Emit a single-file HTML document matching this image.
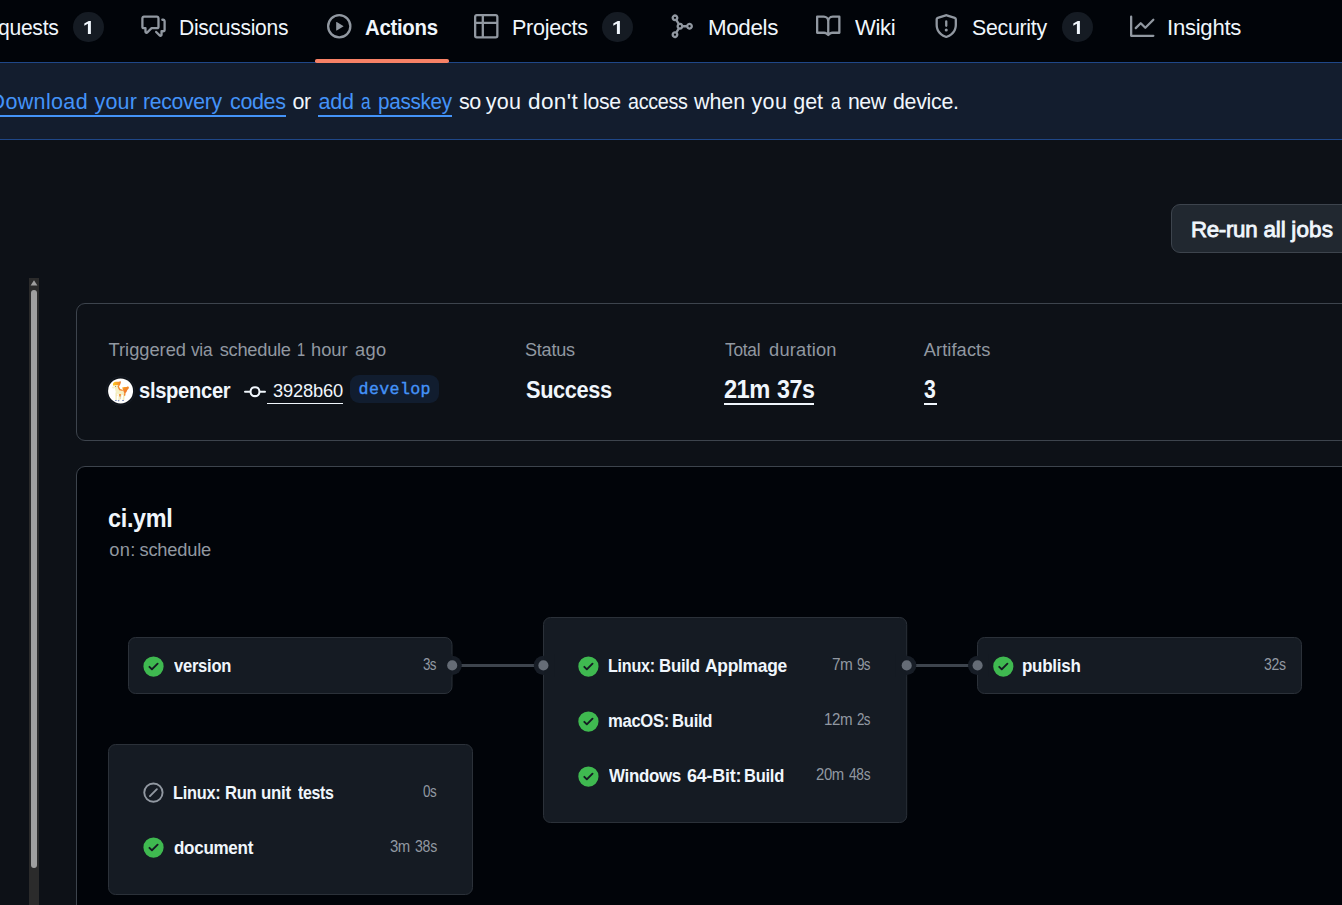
<!DOCTYPE html>
<html lang="en">
<head>
<meta charset="utf-8">
<title>ci.yml · Actions</title>
<style>
html,body{margin:0;padding:0}
body{width:1342px;height:905px;overflow:hidden;background:#0d1117;position:relative;font-family:"Liberation Sans",sans-serif;color:#f0f6fc}
.abs{position:absolute}
.t{position:absolute;white-space:pre;margin:0;padding:0}
#nav{left:0;top:0;width:1342px;height:62px;background:#010409}
#banner{left:-2px;top:62px;width:1346px;height:76px;background:#131d2e;border:1px solid #1f4788;border-left:0;border-right:0}
.counter{width:31px;height:30px;border-radius:15px;background:#151b23}
.ico{position:absolute;fill:#9198a1}
#btn{left:1171px;top:204px;width:220px;height:47px;border:1px solid #3d444d;border-radius:9px;background:#212830}
#card1{left:76px;top:303px;width:1400px;height:136px;border:1px solid #3d444d;border-radius:9px;background:#0d1117}
#card2{left:76px;top:466px;width:1400px;height:600px;border:1px solid #3d444d;border-radius:9px;background:#010409}
.ul{position:absolute;background:#f0f6fc}
</style>
</head>
<body>
<div id="nav" class="abs"></div>
<div id="banner" class="abs"></div>
<!-- active tab underline -->
<div class="abs" style="left:315.200px;top:59px;width:134.300px;height:3.600px;border-radius:1.800px;background:#f78166"></div>

<!-- nav counters -->
<div class="abs counter" style="left:72.9px;top:12px"></div>
<svg class="abs" style="left:84.45px;top:21px;fill:#f0f6fc" width="7" height="13.2" viewBox="0 0 7 13.2"><path d="M6.900 0H4.700L0.300 2.500V4.700L3.900 2.800V13.100H6.900Z"/></svg>
<div class="abs counter" style="left:601.9px;top:12px"></div>
<svg class="abs" style="left:613.45px;top:21px;fill:#f0f6fc" width="7" height="13.2" viewBox="0 0 7 13.2"><path d="M6.900 0H4.700L0.300 2.500V4.700L3.900 2.800V13.100H6.900Z"/></svg>
<div class="abs counter" style="left:1061.9px;top:12px"></div>
<svg class="abs" style="left:1073.45px;top:21px;fill:#f0f6fc" width="7" height="13.2" viewBox="0 0 7 13.2"><path d="M6.900 0H4.700L0.300 2.500V4.700L3.900 2.800V13.100H6.900Z"/></svg>

<!-- nav icons (octicons 16 scaled 1.5x) -->
<svg class="ico" style="left:141px;top:14px" width="25" height="24.5" viewBox="0 0 16 16"><path d="M1.75 1h8.5c.966 0 1.75.784 1.75 1.75v5.5A1.75 1.75 0 0 1 10.25 10H7.061l-2.574 2.573A1.458 1.458 0 0 1 2 11.543V10h-.25A1.75 1.75 0 0 1 0 8.25v-5.5C0 1.784.784 1 1.75 1ZM1.5 2.75v5.5c0 .138.112.25.25.25h1a.75.75 0 0 1 .75.75v2.19l2.72-2.72a.749.749 0 0 1 .53-.22h3.5a.25.25 0 0 0 .25-.25v-5.5a.25.25 0 0 0-.25-.25h-8.5a.25.25 0 0 0-.25.25Zm13 2a.25.25 0 0 0-.25-.25h-.5a.75.75 0 0 1 0-1.5h.5c.966 0 1.75.784 1.75 1.75v5.5A1.75 1.75 0 0 1 14.25 12H14v1.543a1.458 1.458 0 0 1-2.487 1.03L9.22 12.28a.749.749 0 0 1 .326-1.275.749.749 0 0 1 .734.215l2.22 2.22v-2.19a.75.75 0 0 1 .75-.75h1a.25.25 0 0 0 .25-.25Z"/></svg>
<svg class="ico" style="left:327px;top:14px" width="24.5" height="24.5" viewBox="0 0 16 16"><path d="M8 0a8 8 0 1 1 0 16A8 8 0 0 1 8 0ZM1.5 8a6.5 6.5 0 1 0 13 0 6.5 6.5 0 0 0-13 0Zm4.879-2.773 4.264 2.559a.25.25 0 0 1 0 .428l-4.264 2.559A.25.25 0 0 1 6 10.559V5.442a.25.25 0 0 1 .379-.215Z"/></svg>
<svg class="ico" style="left:474px;top:14px" width="24.5" height="24.5" viewBox="0 0 16 16"><path d="M0 1.75C0 .784.784 0 1.75 0h12.5C15.216 0 16 .784 16 1.75v12.5A1.75 1.75 0 0 1 14.25 16H1.75A1.75 1.75 0 0 1 0 14.25ZM6.5 6.5v8h7.75a.25.25 0 0 0 .25-.25V6.5Zm8-1.5V1.75a.25.25 0 0 0-.25-.25H6.5V5Zm-13 1.5v7.75c0 .138.112.25.25.25H5v-8ZM5 5V1.500H1.750a.25.25 0 0 0-.25.25V5Z"/></svg>
<svg class="ico" style="left:669.5px;top:14px" width="24.5" height="24.5" viewBox="0 0 16 16"><path d="M10.628 7.25a2.25 2.25 0 1 1 0 1.5H8.622a2.25 2.25 0 0 1-2.513 1.466L5.03 12.124a2.25 2.25 0 1 1-1.262-.814l1.035-1.832A2.245 2.245 0 0 1 4.25 8c0-.566.209-1.082.553-1.478L3.768 4.690a2.25 2.25 0 1 1 1.262-.814l1.079 1.908A2.25 2.25 0 0 1 8.622 7.250ZM2.5 2.5a.75.75 0 1 0 1.500 0 .75.75 0 0 0-1.500 0Zm4 4.750a.75.75 0 1 0 0 1.500.75.75 0 0 0 0-1.500Zm6.250 0a.75.75 0 1 0 0 1.500.75.75 0 0 0 0-1.500Zm-9.500 5.500a.75.75 0 1 0 0 1.500.75.75 0 0 0 0-1.500Z"/></svg>
<svg class="ico" style="left:816px;top:14px" width="24.5" height="24.5" viewBox="0 0 16 16"><path d="M0 1.750A.75.75 0 0 1 .75 1h4.253c1.227 0 2.317.59 3 1.501A3.743 3.743 0 0 1 11.006 1h4.245a.75.75 0 0 1 .75.75v10.500a.75.75 0 0 1-.75.75h-4.507a2.250 2.250 0 0 0-1.591.659l-.622.621a.75.75 0 0 1-1.060 0l-.622-.621A2.250 2.250 0 0 0 5.258 13H.75a.75.75 0 0 1-.75-.75Zm7.251 10.324.004-5.073-.002-2.253A2.250 2.250 0 0 0 5.003 2.500H1.500v9h3.757a3.750 3.750 0 0 1 1.994.574ZM8.755 4.750l-.004 7.322a3.752 3.752 0 0 1 1.992-.572H14.500v-9h-3.495a2.250 2.250 0 0 0-2.250 2.250Z"/></svg>
<svg class="ico" style="left:934px;top:14px" width="24.5" height="24.5" viewBox="0 0 16 16"><path d="M7.467.133a1.748 1.748 0 0 1 1.066 0l5.250 1.680A1.750 1.750 0 0 1 15 3.480V7c0 1.566-.32 3.182-1.303 4.682-.983 1.498-2.585 2.813-5.032 3.855a1.697 1.697 0 0 1-1.330 0c-2.447-1.042-4.049-2.357-5.032-3.855C1.320 10.182 1 8.566 1 7V3.480a1.750 1.750 0 0 1 1.217-1.667Zm.61 1.429a.25.25 0 0 0-.153 0l-5.250 1.680a.25.25 0 0 0-.174.238V7c0 1.358.275 2.666 1.057 3.860.784 1.194 2.121 2.340 4.366 3.297a.196.196 0 0 0 .154 0c2.245-.956 3.582-2.104 4.366-3.298C13.225 9.666 13.500 8.360 13.500 7V3.480a.251.251 0 0 0-.174-.237l-5.250-1.680ZM8.750 4.750v3a.75.75 0 0 1-1.500 0v-3a.75.75 0 0 1 1.500 0ZM9 10.500a1 1 0 1 1-2 0 1 1 0 0 1 2 0Z"/></svg>
<svg class="ico" style="left:1130px;top:14px" width="24.5" height="24.5" viewBox="0 0 16 16"><path d="M1.500 1.750V13.500h13.750a.75.75 0 0 1 0 1.500H.75a.75.75 0 0 1-.75-.75V1.750a.75.75 0 0 1 1.500 0Zm14.280 2.530-5.250 5.250a.75.75 0 0 1-1.060 0L7 7.060 4.280 9.780a.751.751 0 0 1-1.042-.018.751.751 0 0 1-.018-1.042l3.250-3.250a.75.75 0 0 1 1.060 0L10 7.940l4.720-4.720a.751.751 0 0 1 1.042.018.751.751 0 0 1 .018 1.042Z"/></svg>

<!-- banner link underlines -->
<div class="abs" style="left:-5px;top:115.4px;width:290.6px;height:1.6px;background:#4493f8"></div>
<div class="abs" style="left:318.4px;top:115.4px;width:133.8px;height:1.6px;background:#4493f8"></div>

<!-- Re-run button -->
<div id="btn" class="abs"></div>

<!-- left scrollbar -->
<div class="abs" style="left:29px;top:278px;width:10px;height:640px;background:#2b2b2b"></div>
<svg class="abs" style="left:29px;top:278px" width="10" height="12" viewBox="0 0 10 12"><path d="M5 2.2 8.4 7.6H1.600Z" fill="#9f9f9f"/></svg>
<div class="abs" style="left:31px;top:290px;width:6px;height:578px;border-radius:3px;background:#9f9f9f"></div>

<!-- cards -->
<div id="card1" class="abs"></div>
<div id="card2" class="abs"></div>

<!-- avatar -->
<svg class="abs" style="left:106px;top:376px;overflow:visible" width="30" height="30" viewBox="0 0 905 905">
<defs>
<linearGradient id="mg" x1="0" y1="0.300" x2="1" y2="0.200"><stop offset="0" stop-color="#fdc91f"/><stop offset="0.450" stop-color="#f9a825"/><stop offset="1" stop-color="#f0792a"/></linearGradient>
<linearGradient id="tg" x1="0" y1="0" x2="0.700" y2="1"><stop offset="0" stop-color="#fbbf24"/><stop offset="0.400" stop-color="#f48a2a"/><stop offset="1" stop-color="#ee7428"/></linearGradient>
</defs>
<circle cx="440" cy="450" r="432" fill="none" stroke="#181e27" stroke-width="24"/>
<circle cx="440" cy="450" r="377" fill="#fff"/>
<path d="M210 270C198 220 240 182 300 176C350 170 392 186 420 160C440 148 456 166 446 202C440 240 422 272 402 300C390 318 370 300 350 282C320 270 280 276 250 290C230 300 214 290 210 270Z" fill="url(#mg)"/>
<path d="M430 560h32l-8 142h-26Z" fill="#dcd5a6"/>
<ellipse cx="226" cy="346" rx="46" ry="32" fill="#f6f0c4"/>
<path d="M258 292 340 284 382 330 402 420 470 438 540 468 562 520 542 562 480 572 420 562 350 542 300 502 280 420 268 350Z" fill="#f6f0c4"/>
<path d="M285 500h46l-6 222h-40ZM385 540h42l-12 202h-44ZM520 540h50l-20 192h-50Z" fill="#f3ecbc"/>
<circle cx="285" cy="316" r="14" fill="#4b4233"/>
<path d="M345 300 386 290 402 342 432 390 500 414 512 452 460 446 400 430 370 380Z" fill="#f28c34"/>
<path d="M490 350C520 320 580 330 620 330C650 320 682 308 690 340C692 380 660 402 640 432C630 470 610 500 580 520C560 530 540 500 530 470C510 430 500 390 490 350Z" fill="url(#tg)"/>
<path d="M396 546h54l-6 74h-44ZM540 520l50-10-6 80-40 10Z" fill="#f28c34"/>
<circle cx="336" cy="576" r="13" fill="#f0a060"/>
<path d="M272 722h50v24h-50ZM360 730h40v34h-40ZM485 722h56v24h-56Z" fill="#5f73ad"/>
</svg>

<!-- commit icon -->
<svg class="abs" style="left:244.400px;top:380.900px;fill:#f0f6fc" width="22" height="22" viewBox="0 0 16 16"><path d="M11.930 8.500a4.002 4.002 0 0 1-7.860 0H.75a.75.75 0 0 1 0-1.500h3.320a4.002 4.002 0 0 1 7.860 0h3.320a.75.75 0 0 1 0 1.500Zm-1.430-.75a2.500 2.500 0 1 0-5 0 2.500 2.500 0 0 0 5 0Z"/></svg>
<!-- branch label -->
<div class="abs" style="left:350.2px;top:375.2px;width:88.5px;height:27.6px;border-radius:9px;background:#111d2f"></div>
<!-- underlines -->
<div class="ul" style="left:267.4px;top:403px;width:76px;height:1px"></div>
<div class="ul" style="left:723.8px;top:403px;width:90.4px;height:2px"></div>
<div class="ul" style="left:923.6px;top:403px;width:13.4px;height:2px"></div>

<!-- workflow graph -->
<svg class="abs" style="left:0;top:0" width="1342" height="905" viewBox="0 0 1342 905">
<g fill="#151b23" stroke="#2b3139" stroke-width="1">
<rect x="128.500" y="637.500" width="323.500" height="56" rx="7"/>
<rect x="543.500" y="617.500" width="363.200" height="205" rx="7"/>
<rect x="977.500" y="637.500" width="324" height="56" rx="7"/>
<rect x="108.500" y="744.500" width="364" height="150" rx="7"/>
</g>
<g stroke="#3d444d" stroke-width="3"><path d="M452 665.500H543.500M906.700 665.500H977.500"/></g>
<g fill="#171d26">
<circle cx="452.200" cy="665.400" r="9.600"/><circle cx="543.400" cy="665.400" r="9.600"/><circle cx="906.700" cy="665.400" r="9.600"/><circle cx="977.600" cy="665.400" r="9.600"/>
</g>
<g fill="#151b23">
<rect x="441" y="654" width="10.500" height="23"/><rect x="544" y="654" width="10.500" height="23"/><rect x="895.700" y="654" width="10.500" height="23"/><rect x="978" y="654" width="10.500" height="23"/>
</g>
<g fill="#656c76">
<circle cx="452.200" cy="665.400" r="5.050"/><circle cx="543.400" cy="665.400" r="5.050"/><circle cx="906.700" cy="665.400" r="5.050"/><circle cx="977.600" cy="665.400" r="5.050"/>
</g>
<defs>
<path id="chk" d="M8 16A8 8 0 1 1 8 0a8 8 0 0 1 0 16Zm3.780-9.720a.751.751 0 0 0-.018-1.042.751.751 0 0 0-1.042-.018L6.750 9.190 5.280 7.720a.751.751 0 0 0-1.042.018.751.751 0 0 0-.018 1.042l2 2a.75.75 0 0 0 1.060 0Z"/>
<path id="skp" d="M8 0a8 8 0 1 1 0 16A8 8 0 0 1 8 0ZM1.500 8a6.500 6.500 0 1 0 13 0 6.500 6.500 0 0 0-13 0Zm9.780-2.220-5.500 5.500a.749.749 0 0 1-1.275-.326.749.749 0 0 1 .215-.734l5.500-5.500a.751.751 0 0 1 1.042.018.751.751 0 0 1 .018 1.042Z"/>
</defs>
<g fill="#3fb950">
<use href="#chk" transform="translate(143.400 656.400) scale(1.265)"/>
<use href="#chk" transform="translate(578.300 656.400) scale(1.265)"/>
<use href="#chk" transform="translate(578.300 711.400) scale(1.265)"/>
<use href="#chk" transform="translate(578.300 766.400) scale(1.265)"/>
<use href="#chk" transform="translate(993.200 656.400) scale(1.265)"/>
<use href="#chk" transform="translate(143.400 837.400) scale(1.265)"/>
</g>
<use href="#skp" fill="#9198a1" transform="translate(143.300 782.500) scale(1.265)"/>
</svg>

<span class="t" style="left:-72.06px;top:12.50px;font:400 22.6px/30px 'Liberation Sans', sans-serif;color:#f0f6fc;letter-spacing:0.315px;transform:scaleX(1.0603);transform-origin:0 0;">Pull re</span>
<span class="t" style="left:-2.14px;top:12.50px;font:400 22.6px/30px 'Liberation Sans', sans-serif;color:#f0f6fc;letter-spacing:-0.325px;transform:scaleX(0.9357);transform-origin:0 0;">quests</span>
<span class="t" style="left:179.07px;top:12.50px;font:400 22.6px/30px 'Liberation Sans', sans-serif;color:#f0f6fc;letter-spacing:-0.298px;transform:scaleX(0.9308);transform-origin:0 0;">Discussions</span>
<span class="t" style="left:364.50px;top:12.00px;font:700 22.8px/30px 'Liberation Sans', sans-serif;color:#f0f6fc;letter-spacing:-0.346px;transform:scaleX(0.8959);transform-origin:0 0;">Actions</span>
<span class="t" style="left:512.04px;top:12.50px;font:400 22.6px/30px 'Liberation Sans', sans-serif;color:#f0f6fc;letter-spacing:-0.286px;transform:scaleX(0.9551);transform-origin:0 0;">Projects</span>
<span class="t" style="left:707.51px;top:12.50px;font:400 22.6px/30px 'Liberation Sans', sans-serif;color:#f0f6fc;letter-spacing:-0.360px;transform:scaleX(0.9900);transform-origin:0 0;">Models</span>
<span class="t" style="left:854.75px;top:12.50px;font:400 22.6px/30px 'Liberation Sans', sans-serif;color:#f0f6fc;letter-spacing:-0.350px;transform:scaleX(0.9768);transform-origin:0 0;">Wiki</span>
<span class="t" style="left:972.06px;top:12.50px;font:400 22.6px/30px 'Liberation Sans', sans-serif;color:#f0f6fc;letter-spacing:-0.289px;transform:scaleX(0.9433);transform-origin:0 0;">Security</span>
<span class="t" style="left:1166.79px;top:12.50px;font:400 22.6px/30px 'Liberation Sans', sans-serif;color:#f0f6fc;letter-spacing:-0.271px;transform:scaleX(0.9791);transform-origin:0 0;">Insights</span>
<span class="t" style="left:-10.50px;top:87.00px;font:400 21.5px/30px 'Liberation Sans', sans-serif;color:#4493f8;letter-spacing:0.357px;">Download </span>
<span class="t" style="left:94.50px;top:87.00px;font:400 21.5px/30px 'Liberation Sans', sans-serif;color:#4493f8;letter-spacing:0.167px;">your </span>
<span class="t" style="left:142.77px;top:87.00px;font:400 21.5px/30px 'Liberation Sans', sans-serif;color:#4493f8;letter-spacing:-0.293px;transform:scaleX(0.9850);transform-origin:0 0;">recovery </span>
<span class="t" style="left:230.00px;top:87.00px;font:400 21.5px/30px 'Liberation Sans', sans-serif;color:#4493f8;letter-spacing:-0.356px;">codes</span>
<span class="t" style="left:292.50px;top:87.00px;font:400 21.5px/30px 'Liberation Sans', sans-serif;color:#f0f6fc;letter-spacing:-0.475px;">or</span>
<span class="t" style="left:318.40px;top:87.00px;font:400 21.5px/30px 'Liberation Sans', sans-serif;color:#4493f8;letter-spacing:-0.100px;">add </span>
<span class="t" style="left:361.05px;top:87.00px;font:400 21.5px/30px 'Liberation Sans', sans-serif;color:#4493f8;letter-spacing:0.000px;transform:scaleX(0.8000);transform-origin:0 0;">a </span>
<span class="t" style="left:377.84px;top:87.00px;font:400 21.5px/30px 'Liberation Sans', sans-serif;color:#4493f8;letter-spacing:-0.325px;transform:scaleX(0.9625);transform-origin:0 0;">passkey</span>
<span class="t" style="left:459.05px;top:87.00px;font:400 21.5px/30px 'Liberation Sans', sans-serif;color:#f0f6fc;letter-spacing:-0.450px;">so </span>
<span class="t" style="left:485.80px;top:87.00px;font:400 21.5px/30px 'Liberation Sans', sans-serif;color:#f0f6fc;letter-spacing:0.300px;">you </span>
<span class="t" style="left:528.10px;top:87.00px;font:400 21.5px/30px 'Liberation Sans', sans-serif;color:#f0f6fc;letter-spacing:0.345px;transform:scaleX(1.0490);transform-origin:0 0;">don't </span>
<span class="t" style="left:583.41px;top:87.00px;font:400 21.5px/30px 'Liberation Sans', sans-serif;color:#f0f6fc;letter-spacing:-0.317px;transform:scaleX(0.9879);transform-origin:0 0;">lose </span>
<span class="t" style="left:627.50px;top:87.00px;font:400 21.5px/30px 'Liberation Sans', sans-serif;color:#f0f6fc;letter-spacing:-0.335px;transform:scaleX(0.9170);transform-origin:0 0;">access </span>
<span class="t" style="left:694.00px;top:87.00px;font:400 21.5px/30px 'Liberation Sans', sans-serif;color:#f0f6fc;letter-spacing:-0.100px;">when </span>
<span class="t" style="left:751.40px;top:87.00px;font:400 21.5px/30px 'Liberation Sans', sans-serif;color:#f0f6fc;letter-spacing:0.400px;">you </span>
<span class="t" style="left:793.20px;top:87.00px;font:400 21.5px/30px 'Liberation Sans', sans-serif;color:#f0f6fc;letter-spacing:0.000px;">get </span>
<span class="t" style="left:830.80px;top:87.00px;font:400 21.5px/30px 'Liberation Sans', sans-serif;color:#f0f6fc;letter-spacing:0.000px;transform:scaleX(0.8083);transform-origin:0 0;">a </span>
<span class="t" style="left:847.51px;top:87.00px;font:400 21.5px/30px 'Liberation Sans', sans-serif;color:#f0f6fc;letter-spacing:-0.488px;transform:scaleX(0.9915);transform-origin:0 0;">new </span>
<span class="t" style="left:892.80px;top:87.00px;font:400 21.5px/30px 'Liberation Sans', sans-serif;color:#f0f6fc;letter-spacing:-0.279px;transform:scaleX(0.9920);transform-origin:0 0;">device.</span>
<span class="t" style="left:1190.91px;top:214.50px;font:400 22.5px/30px 'Liberation Sans', sans-serif;-webkit-text-stroke:0.85px;color:#f0f6fc;letter-spacing:-0.335px;transform:scaleX(0.9920);transform-origin:0 0;">Re-run </span>
<span class="t" style="left:1263.40px;top:214.50px;font:400 22.5px/30px 'Liberation Sans', sans-serif;-webkit-text-stroke:0.85px;color:#f0f6fc;letter-spacing:-0.050px;">all </span>
<span class="t" style="left:1291.30px;top:214.50px;font:400 22.5px/30px 'Liberation Sans', sans-serif;-webkit-text-stroke:0.85px;color:#f0f6fc;letter-spacing:0.133px;">jobs</span>
<span class="t" style="left:108.60px;top:334.50px;font:400 18.3px/30px 'Liberation Sans', sans-serif;color:#9198a1;letter-spacing:-0.025px;">Triggered </span>
<span class="t" style="left:191.30px;top:334.50px;font:400 18.3px/30px 'Liberation Sans', sans-serif;color:#9198a1;letter-spacing:-0.300px;transform:scaleX(0.9444);transform-origin:0 0;">via </span>
<span class="t" style="left:219.70px;top:334.50px;font:400 18.3px/30px 'Liberation Sans', sans-serif;color:#9198a1;letter-spacing:-0.261px;">schedule </span>
<span class="t" style="left:296.80px;top:334.50px;font:400 18.3px/30px 'Liberation Sans', sans-serif;color:#9198a1;letter-spacing:0.000px;transform:scaleX(0.8000);transform-origin:0 0;">1 </span>
<span class="t" style="left:311.00px;top:334.50px;font:400 18.3px/30px 'Liberation Sans', sans-serif;color:#9198a1;letter-spacing:0.000px;">hour </span>
<span class="t" style="left:354.90px;top:334.50px;font:400 18.3px/30px 'Liberation Sans', sans-serif;color:#9198a1;letter-spacing:0.400px;">ago</span>
<span class="t" style="left:139.01px;top:375.50px;font:700 22.5px/30px 'Liberation Sans', sans-serif;color:#f0f6fc;letter-spacing:-0.325px;transform:scaleX(0.8945);transform-origin:0 0;">slspencer</span>
<span class="t" style="left:273.00px;top:375.50px;font:400 18.3px/30px 'Liberation Sans', sans-serif;color:#f0f6fc;letter-spacing:-0.150px;">3928b60</span>
<span class="t" style="left:358.60px;top:374.50px;font:400 16.667px/30px 'Liberation Mono', monospace;color:#4493f8;letter-spacing:0.333px;-webkit-text-stroke:0.35px">develop</span>
<span class="t" style="left:525.21px;top:334.50px;font:400 18.3px/30px 'Liberation Sans', sans-serif;color:#9198a1;letter-spacing:-0.255px;transform:scaleX(0.9894);transform-origin:0 0;">Status</span>
<span class="t" style="left:526.12px;top:374.50px;font:700 24.6px/30px 'Liberation Sans', sans-serif;color:#f0f6fc;letter-spacing:-0.408px;transform:scaleX(0.8844);transform-origin:0 0;">Success</span>
<span class="t" style="left:724.60px;top:334.50px;font:400 18.3px/30px 'Liberation Sans', sans-serif;color:#9198a1;letter-spacing:-0.238px;transform:scaleX(0.9447);transform-origin:0 0;">Total </span>
<span class="t" style="left:769.10px;top:334.50px;font:400 18.3px/30px 'Liberation Sans', sans-serif;color:#9198a1;letter-spacing:0.186px;">duration</span>
<span class="t" style="left:723.80px;top:374.00px;font:700 25px/30px 'Liberation Sans', sans-serif;color:#f0f6fc;letter-spacing:-0.613px;transform:scaleX(0.9482);transform-origin:0 0;">21m </span>
<span class="t" style="left:776.80px;top:374.00px;font:700 25px/30px 'Liberation Sans', sans-serif;color:#f0f6fc;letter-spacing:-0.512px;transform:scaleX(0.9306);transform-origin:0 0;">37s</span>
<span class="t" style="left:923.70px;top:334.50px;font:400 18.3px/30px 'Liberation Sans', sans-serif;color:#9198a1;letter-spacing:0.087px;">Artifacts</span>
<span class="t" style="left:924.10px;top:374.00px;font:700 25px/30px 'Liberation Sans', sans-serif;color:#f0f6fc;letter-spacing:0.000px;transform:scaleX(0.8500);transform-origin:0 0;">3</span>
<span class="t" style="left:107.96px;top:503.00px;font:700 25px/30px 'Liberation Sans', sans-serif;color:#f0f6fc;letter-spacing:-0.345px;transform:scaleX(0.9379);transform-origin:0 0;">ci.yml</span>
<span class="t" style="left:109.30px;top:534.50px;font:400 18.3px/30px 'Liberation Sans', sans-serif;color:#9198a1;letter-spacing:0.300px;">on: </span>
<span class="t" style="left:139.50px;top:534.50px;font:400 18.3px/30px 'Liberation Sans', sans-serif;color:#9198a1;letter-spacing:-0.214px;">schedule</span>
<span class="t" style="left:174.10px;top:650.50px;font:700 18.5px/30px 'Liberation Sans', sans-serif;color:#f0f6fc;letter-spacing:-0.271px;transform:scaleX(0.8931);transform-origin:0 0;">version</span>
<span class="t" style="left:422.80px;top:649.50px;font:400 15.6px/30px 'Liberation Sans', sans-serif;color:#9198a1;letter-spacing:-0.837px;transform:scaleX(0.8600);transform-origin:0 0;">3s</span>
<span class="t" style="left:608.03px;top:650.50px;font:700 18.5px/30px 'Liberation Sans', sans-serif;color:#f0f6fc;letter-spacing:-0.265px;transform:scaleX(0.8708);transform-origin:0 0;">Linux: </span>
<span class="t" style="left:659.19px;top:650.50px;font:700 18.5px/30px 'Liberation Sans', sans-serif;color:#f0f6fc;letter-spacing:-0.281px;transform:scaleX(0.9094);transform-origin:0 0;">Build </span>
<span class="t" style="left:705.20px;top:650.50px;font:700 18.5px/30px 'Liberation Sans', sans-serif;color:#f0f6fc;letter-spacing:-0.318px;transform:scaleX(0.9427);transform-origin:0 0;">AppImage</span>
<span class="t" style="left:832.30px;top:649.50px;font:400 15.6px/30px 'Liberation Sans', sans-serif;color:#9198a1;letter-spacing:-0.525px;transform:scaleX(0.9866);transform-origin:0 0;">7m </span>
<span class="t" style="left:857.44px;top:649.50px;font:400 15.6px/30px 'Liberation Sans', sans-serif;color:#9198a1;letter-spacing:-0.936px;transform:scaleX(0.8600);transform-origin:0 0;">9s</span>
<span class="t" style="left:608.00px;top:705.50px;font:700 18.5px/30px 'Liberation Sans', sans-serif;color:#f0f6fc;letter-spacing:-0.340px;transform:scaleX(0.8989);transform-origin:0 0;">macOS: </span>
<span class="t" style="left:672.30px;top:705.50px;font:700 18.5px/30px 'Liberation Sans', sans-serif;color:#f0f6fc;letter-spacing:-0.281px;transform:scaleX(0.8980);transform-origin:0 0;">Build</span>
<span class="t" style="left:824.13px;top:704.50px;font:400 15.6px/30px 'Liberation Sans', sans-serif;color:#9198a1;letter-spacing:-0.363px;transform:scaleX(0.9691);transform-origin:0 0;">12m </span>
<span class="t" style="left:857.44px;top:704.50px;font:400 15.6px/30px 'Liberation Sans', sans-serif;color:#9198a1;letter-spacing:-0.936px;transform:scaleX(0.8600);transform-origin:0 0;">2s</span>
<span class="t" style="left:608.90px;top:760.50px;font:700 18.5px/30px 'Liberation Sans', sans-serif;color:#f0f6fc;letter-spacing:-0.338px;transform:scaleX(0.9142);transform-origin:0 0;">Windows </span>
<span class="t" style="left:686.80px;top:760.50px;font:700 18.5px/30px 'Liberation Sans', sans-serif;color:#f0f6fc;letter-spacing:-0.233px;transform:scaleX(0.9707);transform-origin:0 0;">64-Bit: </span>
<span class="t" style="left:743.91px;top:760.50px;font:700 18.5px/30px 'Liberation Sans', sans-serif;color:#f0f6fc;letter-spacing:-0.281px;transform:scaleX(0.8912);transform-origin:0 0;">Build</span>
<span class="t" style="left:816.30px;top:759.50px;font:400 15.6px/30px 'Liberation Sans', sans-serif;color:#9198a1;letter-spacing:-0.375px;transform:scaleX(0.9538);transform-origin:0 0;">20m </span>
<span class="t" style="left:849.40px;top:759.50px;font:400 15.6px/30px 'Liberation Sans', sans-serif;color:#9198a1;letter-spacing:-0.312px;transform:scaleX(0.8821);transform-origin:0 0;">48s</span>
<span class="t" style="left:1022.28px;top:650.50px;font:700 18.5px/30px 'Liberation Sans', sans-serif;color:#f0f6fc;letter-spacing:-0.267px;transform:scaleX(0.9167);transform-origin:0 0;">publish</span>
<span class="t" style="left:1264.00px;top:649.50px;font:400 15.6px/30px 'Liberation Sans', sans-serif;color:#9198a1;letter-spacing:-0.312px;transform:scaleX(0.9026);transform-origin:0 0;">32s</span>
<span class="t" style="left:173.42px;top:777.50px;font:700 18.5px/30px 'Liberation Sans', sans-serif;color:#f0f6fc;letter-spacing:-0.265px;transform:scaleX(0.8824);transform-origin:0 0;">Linux: </span>
<span class="t" style="left:225.00px;top:777.50px;font:700 18.5px/30px 'Liberation Sans', sans-serif;color:#f0f6fc;letter-spacing:-0.425px;transform:scaleX(0.8989);transform-origin:0 0;">Run </span>
<span class="t" style="left:260.99px;top:777.50px;font:700 18.5px/30px 'Liberation Sans', sans-serif;color:#f0f6fc;letter-spacing:-0.275px;transform:scaleX(0.9106);transform-origin:0 0;">unit </span>
<span class="t" style="left:298.10px;top:777.50px;font:700 18.5px/30px 'Liberation Sans', sans-serif;color:#f0f6fc;letter-spacing:-0.343px;transform:scaleX(0.8600);transform-origin:0 0;">tests</span>
<span class="t" style="left:422.80px;top:776.50px;font:400 15.6px/30px 'Liberation Sans', sans-serif;color:#9198a1;letter-spacing:-0.605px;transform:scaleX(0.8600);transform-origin:0 0;">0s</span>
<span class="t" style="left:174.30px;top:832.50px;font:700 18.5px/30px 'Liberation Sans', sans-serif;color:#f0f6fc;letter-spacing:-0.318px;transform:scaleX(0.9208);transform-origin:0 0;">document</span>
<span class="t" style="left:389.90px;top:831.50px;font:400 15.6px/30px 'Liberation Sans', sans-serif;color:#9198a1;letter-spacing:-0.525px;transform:scaleX(0.9573);transform-origin:0 0;">3m </span>
<span class="t" style="left:414.80px;top:831.50px;font:400 15.6px/30px 'Liberation Sans', sans-serif;color:#9198a1;letter-spacing:-0.312px;transform:scaleX(0.9067);transform-origin:0 0;">38s</span>
</body>
</html>
